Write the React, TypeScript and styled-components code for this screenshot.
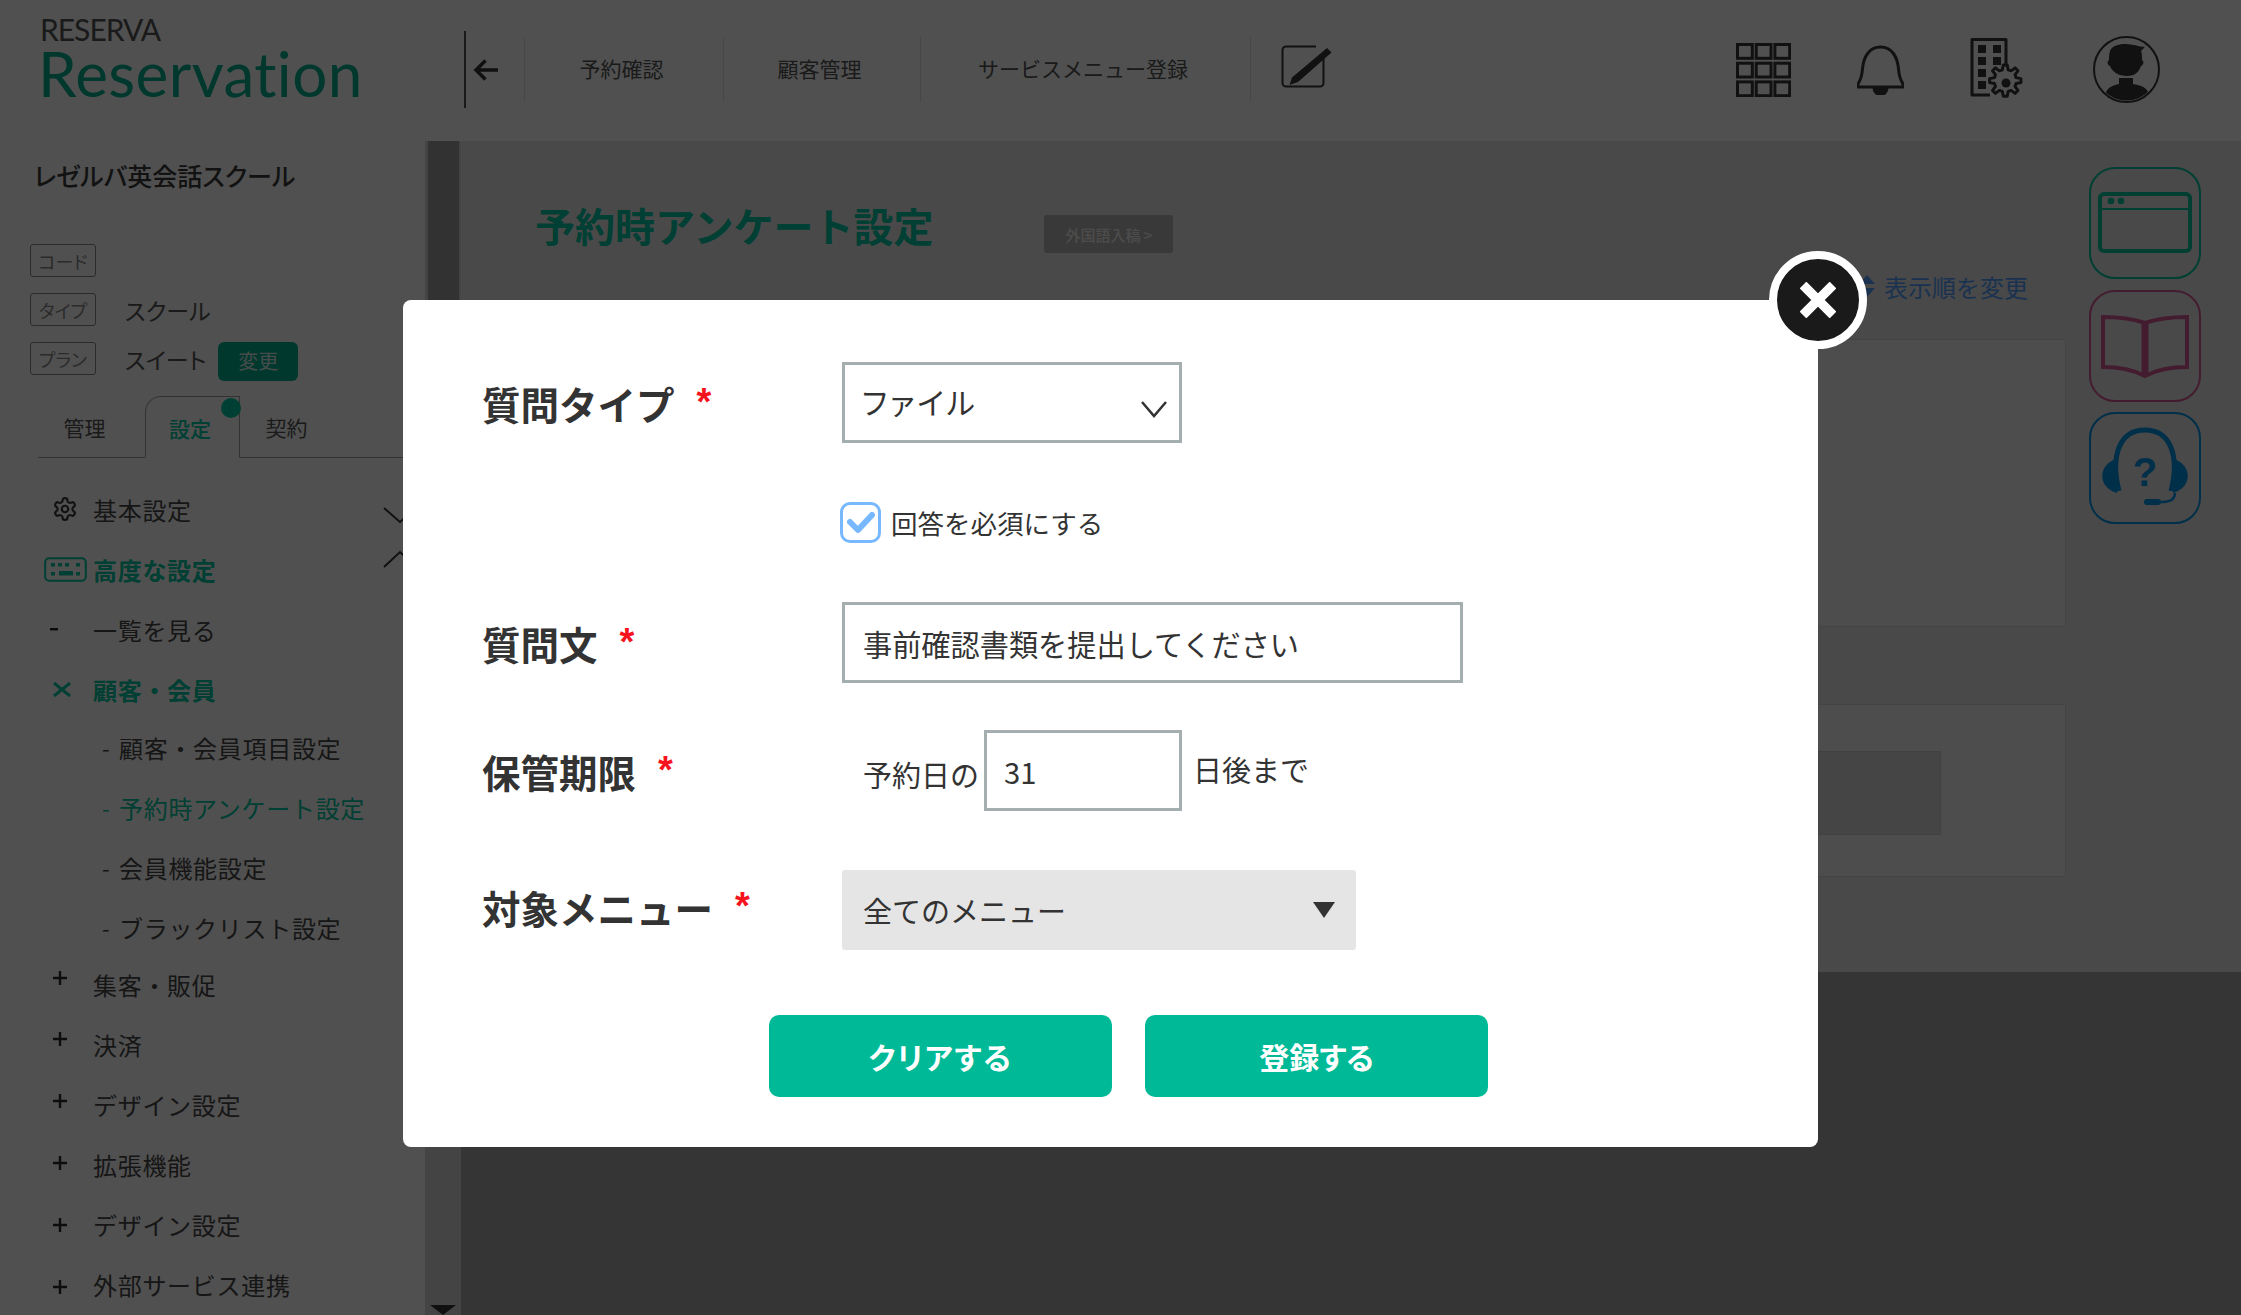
import styled, { createGlobalStyle } from 'styled-components'

const GlobalStyle = createGlobalStyle`
    html, body {
        margin: 0;
        padding: 0;
        background: #a9a9a9;
        font-family: "Noto Sans CJK JP", "Noto Sans", sans-serif;
        color: #404040;
    }
    * {
        box-sizing: border-box;
    }
`

const GREEN = '#00c8a2'

const Page = styled.div`
    width: 2241px;
    height: 1315px;
    overflow: hidden;
    position: relative;
`

const Overlay = styled.div`
    position: absolute;
    inset: 0;
    background: rgba(0, 0, 0, 0.686);
`

/* header */

const Header = styled.header`
    height: 141px;
    background: #fff;
    display: flex;
    align-items: center;
    padding: 0 81px 2px 0;
`

const Logo = styled.div`
    width: 464px;
    padding-left: 40px;
    margin-top: -24px;
`

const LogoTop = styled.div`
    font-family: "Lato", sans-serif;
    font-size: 30px;
    line-height: 30px;
    letter-spacing: -1px;
    color: #555;
`

const LogoMain = styled.div`
    margin-left: -2px;
    font-family: "Lato", sans-serif;
    font-size: 62px;
    line-height: 58px;
    letter-spacing: 0.4px;
    color: #00b391;
`

const BackCell = styled.div`
    width: 60px;
    height: 77px;
    border-left: 2px solid #555;
    display: flex;
    align-items: center;
    padding-left: 7px;
`

const NavItem = styled.div<{ $w: number }>`
    width: ${p => p.$w}px;
    height: 65px;
    border-left: 1px solid #e2e2e2;
    padding: 0 5px 3px 0;
    display: flex;
    align-items: center;
    justify-content: center;
    font-size: 21px;
    color: #555;
`

const EditCell = styled.div`
    height: 65px;
    border-left: 1px solid #e2e2e2;
    padding: 0 0 5px 30px;
    display: flex;
    align-items: center;
`

const HeaderIcons = styled.div`
    margin-left: auto;
    display: flex;
    align-items: center;
    gap: 66px;
    > :last-child {
        margin-left: 4px;
    }
`

/* body */

const Body = styled.div`
    display: flex;
    align-items: flex-start;
    height: 1174px;
`

const Sidebar = styled.aside`
    width: 425px;
    height: 100%;
    background: #fff;
    padding-top: 20px;
    flex-shrink: 0;
`

const SchoolName = styled.div`
    margin-left: 34px;
    font-size: 25px;
    line-height: 28px;
    font-weight: 500;
    color: #3c3c3c;
    font-feature-settings: "palt";
`

const InfoList = styled.div`
    margin: 55px 0 0 30px;
    display: flex;
    flex-direction: column;
    gap: 16px;
`

const InfoRow = styled.div`
    height: 33px;
    display: flex;
    align-items: center;
    font-size: 23px;
    line-height: 28px;
    color: #555;
    font-feature-settings: "palt";
`

const InfoBadge = styled.span`
    width: 66px;
    height: 33px;
    border: 1px solid #8a8a8a;
    border-radius: 3px;
    margin-right: 29px;
    font-size: 18px;
    color: #8a8a8a;
    display: flex;
    align-items: center;
    justify-content: center;
`

const ChangeButton = styled.span`
    width: 80px;
    height: 39px;
    margin: 5px 0 0 12px;
    background: #00b391;
    border-radius: 6px;
    color: #d8f0ea;
    font-size: 20px;
    display: flex;
    align-items: center;
    justify-content: center;
`

const Tabs = styled.div`
    margin: 21px 0 0 38px;
    height: 62px;
    border-bottom: 1px solid #a0a0a0;
    display: flex;
    align-items: stretch;
`

const Tab = styled.div<{ $active?: boolean }>`
    position: relative;
    width: ${p => (p.$active ? '95px' : '107px')};
    padding: 17px ${p => (p.$active ? '5px' : '14px')} 0 0;
    margin-bottom: -1px;
    text-align: center;
    font-size: 21px;
    line-height: 28px;
    color: ${p => (p.$active ? GREEN : '#555')};
    ${p => p.$active && `
        font-weight: 500;
        background: #fff;
        border: 1px solid #a0a0a0;
        border-bottom: 1px solid #fff;
        border-radius: 16px 0 0 0;
    `}
`

const TabDot = styled.span`
    position: absolute;
    top: 1px;
    right: -2px;
    width: 20px;
    height: 20px;
    border-radius: 50%;
    background: ${GREEN};
`

const Menu = styled.nav`
    margin-top: 21px;
`

const MenuRow = styled.div<{ $active?: boolean; $strong?: boolean }>`
    height: 60px;
    padding: 0 0 0 44px;
    display: flex;
    align-items: center;
    font-size: 24px;
    letter-spacing: 0.7px;
    font-weight: ${p => (p.$strong ? 700 : 400)};
    color: ${p => (p.$active ? GREEN : '#484848')};
`

const MenuIcon = styled.span<{ $left?: number; $lift?: number }>`
    width: 49px;
    flex-shrink: 0;
    padding-left: ${p => p.$left ?? 0}px;
    margin-top: ${p => -(p.$lift ?? 0)}px;
    display: flex;
    align-items: center;
`

const Chevron = styled.svg<{ $top: number }>`
    margin-left: auto;
    margin-right: 8px;
    align-self: flex-start;
    margin-top: ${p => p.$top}px;
    flex-shrink: 0;
`

const SubMenu = styled.div`
    margin: -2px 0 -3px;
`

const SubRow = styled.div<{ $active?: boolean }>`
    height: 60px;
    padding-left: 102px;
    display: flex;
    align-items: center;
    font-size: 24px;
    letter-spacing: 0.7px;
    color: ${p => (p.$active ? GREEN : '#484848')};
    &::before {
        content: '-';
        width: 17px;
        font-size: 22px;
    }
`

const ScrollBar = styled.div`
    width: 36px;
    height: 100%;
    flex-shrink: 0;
    background: #d8d8d8;
    display: flex;
    flex-direction: column;
    justify-content: space-between;
    align-items: center;
`

const ScrollThumb = styled.div`
    width: 31px;
    height: 320px;
    background: #a0a0a0;
`

const ScrollArrow = styled.div`
    width: 0;
    height: 0;
    border-left: 13px solid transparent;
    border-right: 13px solid transparent;
    border-top: 10px solid #333;
`

const Main = styled.main`
    flex: 1;
    height: 831px;
    background: #e8e8e8;
    display: flex;
    align-items: flex-start;
`

const Content = styled.div`
    width: 1605px;
    padding: 56px 0 0 74px;
`

const TitleRow = styled.div`
    display: flex;
    align-items: flex-start;
`

const Title = styled.h1`
    margin: 0;
    font-size: 40px;
    line-height: 56px;
    font-weight: 700;
    color: ${GREEN};
`

const LocaleButton = styled.span`
    width: 129px;
    height: 38px;
    margin: 18px 0 0 111px;
    border-radius: 3px;
    background: #b5b5b5;
    color: #f2f2f2;
    font-size: 15px;
    font-weight: 500;
    display: flex;
    align-items: center;
    justify-content: center;
`

const SortLink = styled.div`
    margin: 18px 38px 0 0;
    height: 30px;
    display: flex;
    justify-content: flex-end;
    align-items: center;
    gap: 9px;
    font-size: 24px;
    color: #55a0ff;
`

const Card = styled.div<{ $h: number; $top: number }>`
    height: ${p => p.$h}px;
    margin-top: ${p => p.$top}px;
    background: #f4f4f4;
    border: 1px solid #d8d8d8;
`

const CardInner = styled.div`
    margin: 46px 124px 0 60px;
    height: 84px;
    background: #dcdcdc;
    border: 1px solid #cfcfcf;
`

const Rail = styled.div`
    margin: 26px 0 0 23px;
    display: flex;
    flex-direction: column;
    gap: 10.5px;
`

const RailTile = styled.div<{ $color: string }>`
    width: 112px;
    height: 112px;
    border: 2px solid ${p => p.$color};
    border-radius: 26px;
    color: ${p => p.$color};
    display: flex;
    align-items: center;
    justify-content: center;
`

/* modal */

const Modal = styled.div`
    position: absolute;
    left: 403px;
    top: 300px;
    width: 1415px;
    height: 847px;
    background: #fff;
    border-radius: 8px;
    padding: 62px 0 0 79px;
`

const CloseButton = styled.div`
    position: absolute;
    top: -49px;
    right: -49px;
    width: 98px;
    height: 98px;
    border-radius: 50%;
    background: #1a1a1a;
    border: 8px solid #fff;
    display: flex;
    align-items: center;
    justify-content: center;
`

const FormRow = styled.div<{ $top?: number }>`
    display: grid;
    grid-template-columns: 360px 1fr;
    align-items: center;
    margin-top: ${p => p.$top ?? 0}px;
`

const FieldLabel = styled.label<{ $raise?: number }>`
    display: flex;
    margin-bottom: ${p => p.$raise ?? 0}px;
    font-size: 38.5px;
    line-height: 44px;
    font-weight: 700;
    color: #333;
`

const Required = styled.span`
    margin: -1px 0 0 22px;
    font-family: "Liberation Sans", sans-serif;
    font-weight: 700;
    font-size: 38px;
    color: #f5141e;
`

const Control = styled.div`
    width: 340px;
    height: 81px;
    border: 3px solid #a4aeae;
    padding: 0 12px 4px 17px;
    display: flex;
    align-items: center;
    justify-content: space-between;
    font-size: 30px;
    letter-spacing: 3px;
    color: #333;
    font-feature-settings: "palt";
`

const Caret = styled.svg`
    margin-top: 16px;
`

const CheckLine = styled.div`
    display: flex;
    align-items: center;
    gap: 10px;
    margin-left: -2px;
    font-size: 26.5px;
    color: #333;
`

const CheckBox = styled.span`
    width: 41px;
    height: 41px;
    border: 3px solid #78b8ff;
    border-radius: 10px;
    display: flex;
    align-items: center;
    justify-content: center;
`

const TextField = styled.input<{ $w: number; $pad: number }>`
    width: ${p => p.$w}px;
    height: 81px;
    border: 3px solid #a4aeae;
    border-radius: 0;
    padding: 0 ${p => p.$pad}px;
    outline: none;
    font-family: inherit;
    font-size: 29.2px;
    color: #333;
    background: #fff;
`

const PeriodLine = styled.div`
    display: flex;
    align-items: center;
    padding-left: 21px;
    font-size: 29px;
    color: #333;
`

const PeriodText = styled.span<{ $shift: number }>`
    margin: ${p => p.$shift}px ${p => (p.$shift > 0 ? 5 : 0)}px 0 ${p => (p.$shift > 0 ? 0 : 11)}px;
`

const GraySelect = styled.div`
    width: 514px;
    height: 80px;
    background: #e5e5e5;
    border-radius: 3px;
    padding: 0 21px;
    display: flex;
    align-items: center;
    justify-content: space-between;
    font-size: 29px;
    color: #333;
`

const ArrowDown = styled.span`
    width: 0;
    height: 0;
    border-left: 11px solid transparent;
    border-right: 11px solid transparent;
    border-top: 16px solid #333;
`

const Actions = styled.div`
    margin: 65px 0 0 287px;
    display: flex;
    gap: 33px;
`

const ActionButton = styled.button<{ $tracking?: number }>`
    width: 343px;
    height: 82px;
    border: none;
    border-radius: 10px;
    background: #00ba97;
    color: #fff;
    font-family: inherit;
    font-size: 30px;
    font-weight: 700;
    letter-spacing: ${p => p.$tracking ?? 0}px;
    font-feature-settings: "palt";
`

const Gear = () => (
    <svg width="26" height="26" viewBox="0 0 24 24" fill="none" stroke="#3a3a3a" strokeWidth="2" strokeLinecap="round" strokeLinejoin="round">
        <path d="M12.22 2h-.44a2 2 0 0 0-2 2v.18a2 2 0 0 1-1 1.73l-.43.25a2 2 0 0 1-2 0l-.15-.08a2 2 0 0 0-2.73.73l-.22.38a2 2 0 0 0 .73 2.73l.15.1a2 2 0 0 1 1 1.72v.51a2 2 0 0 1-1 1.74l-.15.09a2 2 0 0 0-.73 2.73l.22.38a2 2 0 0 0 2.73.73l.15-.08a2 2 0 0 1 2 0l.43.25a2 2 0 0 1 1 1.73V20a2 2 0 0 0 2 2h.44a2 2 0 0 0 2-2v-.18a2 2 0 0 1 1-1.73l.43-.25a2 2 0 0 1 2 0l.15.08a2 2 0 0 0 2.73-.73l.22-.39a2 2 0 0 0-.73-2.73l-.15-.08a2 2 0 0 1-1-1.74v-.5a2 2 0 0 1 1-1.74l.15-.09a2 2 0 0 0 .73-2.73l-.22-.38a2 2 0 0 0-2.73-.73l-.15.08a2 2 0 0 1-2 0l-.43-.25a2 2 0 0 1-1-1.73V4a2 2 0 0 0-2-2z" />
        <circle cx="12" cy="12" r="3" />
    </svg>
)

const Keyboard = () => (
    <svg width="43" height="25" viewBox="0 0 43 25" fill={GREEN}>
        <rect x="1.2" y="1.2" width="40.6" height="22.6" rx="4" fill="none" stroke={GREEN} strokeWidth="2" />
        <rect x="7" y="6" width="4" height="3.5" />
        <rect x="14" y="6" width="4" height="3.5" />
        <rect x="21" y="6" width="4" height="3.5" />
        <rect x="32" y="6" width="4" height="3.5" />
        <rect x="7" y="15" width="4" height="3.5" />
        <rect x="15" y="14" width="14" height="4.5" />
        <rect x="32" y="15" width="4" height="3.5" />
    </svg>
)

const Plus = () => (
    <svg width="14" height="14" viewBox="0 0 14 14" stroke="#2c2c2c" strokeWidth="2.4">
        <path d="M7 0v14M0 7h14" />
    </svg>
)

const Dash = () => (
    <svg width="8" height="3" viewBox="0 0 8 3">
        <rect width="8" height="2.4" fill="#222" />
    </svg>
)

const Cross = () => (
    <svg width="18" height="15" viewBox="0 0 18 15" stroke={GREEN} strokeWidth="3">
        <path d="M1 1l16 13M17 1L1 14" />
    </svg>
)

const ChevronDown = () => (
    <Chevron $top={28} width="34" height="17" viewBox="0 0 34 17" fill="none" stroke="#333" strokeWidth="2">
        <path d="M1 1l16 14L33 1" />
    </Chevron>
)

const ChevronUp = () => (
    <Chevron $top={11} width="34" height="18" viewBox="0 0 34 18" fill="none" stroke="#333" strokeWidth="2">
        <path d="M1 17L17 2l16 15" />
    </Chevron>
)

const GridIcon = () => {
    const cells = [0, 1, 2].flatMap(r => [0, 1, 2].map(c => ({ r, c })))
    return (
        <svg width="55" height="54" viewBox="0 0 55 54" fill="none" stroke="#363636" strokeWidth="3">
            {cells.map(({ r, c }) => (
                <rect key={`${r}-${c}`} x={1.5 + c * 18.7} y={1.5 + r * 18.7} width="14.8" height="13.8" />
            ))}
        </svg>
    )
}

const BellIcon = () => (
    <svg width="47" height="50" viewBox="0 0 47 50" fill="none" stroke="#363636" strokeWidth="3" strokeLinejoin="round">
        <path d="M23.5 2C12 2 6.5 12 5.5 24c-.6 7.5-1.5 10-4 14-.8 1.3-.5 4-.5 4h45s.3-2.700-.5-4c-2.500-4-3.400-6.500-4-14C40.500 12 35 2 23.500 2z" />
        <path d="M17 43a6.500 6.500 0 0 0 13 0z" fill="#363636" />
    </svg>
)

const BuildingGearIcon = () => (
    <svg width="53" height="63" viewBox="0 0 53 63" fill="#363636">
        <path d="M20 57H2V1.500h34V29" fill="none" stroke="#363636" strokeWidth="3" strokeLinejoin="round" />
        <rect x="8" y="7" width="8" height="8" />
        <rect x="23" y="7" width="8" height="8" />
        <rect x="8" y="19" width="8" height="8" />
        <rect x="23" y="19" width="8" height="8" />
        <rect x="8" y="31" width="8" height="8" />
        <rect x="8" y="43" width="8" height="8" />
        <path
            d="M35 28h4l1 5 3 1 4-3 3 3-3 4 1 3 5 1v4l-5 1-1 3 3 4-3 3-4-3-3 1-1 5h-4l-1-5-3-1-4 3-3-3 3-4-1-3-5-1v-4l5-1 1-3-3-4 3-3 4 3 3-1z"
            transform="translate(-1 -0.500) scale(0.98)"
            fill="#fff"
            stroke="#363636"
            strokeWidth="3"
            strokeLinejoin="round"
        />
        <circle cx="36" cy="45" r="4.500" />
    </svg>
)

const AvatarIcon = () => (
    <svg width="67" height="67" viewBox="0 0 67 67">
        <defs>
            <clipPath id="avatar-circle">
                <circle cx="33.500" cy="33.500" r="31" />
            </clipPath>
        </defs>
        <circle cx="33.500" cy="33.500" r="32.500" fill="none" stroke="#363636" strokeWidth="2" />
        <g clipPath="url(#avatar-circle)" fill="#363636">
            <path d="M17 15c2-5 8-7 15-7 5 0 10 1 13 2 2 .5 5 1 7 .5-1.500 2-3 3.500-4 4.500 1 2 1 5 1 9 2 1 2 5-1 6-2 6-6 10-14 10S19 36 17 30c-3-1-3-5-1-6 0-3 0-6 1-9z" />
            <path d="M26 42h14v6c5 1 10 2 13 5 2 2 3 5 3 8v6H12v-6c0-3 1-6 3-8 3-3 7-4 11-5z" />
        </g>
    </svg>
)

const EditIcon = () => (
    <svg width="52" height="44" viewBox="0 0 52 44" fill="none">
        <path d="M35 1.500H5a3.500 3.500 0 0 0-3.500 3.500v33a3.500 3.500 0 0 0 3.500 3.500h34a3.500 3.500 0 0 0 3.500-3.500V10" stroke="#363636" strokeWidth="2" />
        <path d="M46 3l4.500 4.500L17 37l-8.500 3 2.500-7.500z" fill="#363636" />
    </svg>
)

const BackArrow = () => (
    <svg width="25" height="22" viewBox="0 0 25 22" fill="none" stroke="#333" strokeWidth="3.500">
        <path d="M25 11H3M12.500 1.500L3 11l9.500 9.500" />
    </svg>
)

const SortIcon = () => (
    <svg width="16" height="22" viewBox="0 0 16 22" fill="#55a0ff">
        <path d="M8 0l8 9H0zM8 22l-8-9h16z" />
    </svg>
)

const WindowIcon = () => (
    <svg width="106" height="106" viewBox="0 0 106 106" fill="none" stroke="currentColor">
        <rect x="8" y="24" width="90" height="57" rx="4" strokeWidth="4" />
        <path d="M8 39h90" strokeWidth="2" />
        <circle cx="19" cy="31" r="3.300" fill="currentColor" stroke="none" />
        <circle cx="29" cy="31" r="3.300" fill="currentColor" stroke="none" />
    </svg>
)

const BookIcon = () => (
    <svg width="106" height="106" viewBox="0 0 106 106" fill="none" stroke="currentColor">
        <path d="M11 24q25 0 42 6q17-6 42-6v50q-25 0-42 9q-17-9-42-9z" strokeWidth="4" />
        <path d="M53 30v52" strokeWidth="7" />
    </svg>
)

const HelpIcon = () => (
    <svg width="106" height="106" viewBox="0 0 106 106" fill="currentColor">
        <path d="M27 76C18 40 28 15 53 15s35 25 26 61" fill="none" stroke="currentColor" strokeWidth="5" />
        <path d="M24 44C6 50 5 72 25 78z" />
        <path d="M82 44c18 6 19 28-1 34z" />
        <path d="M83 78q0 9-13 9H66" fill="none" stroke="currentColor" strokeWidth="2.500" />
        <rect x="52" y="84" width="17" height="6" rx="3" />
        <text x="53" y="71" textAnchor="middle" fontFamily="'Liberation Sans', sans-serif" fontWeight="700" fontSize="40">?</text>
    </svg>
)

const CheckMark = () => (
    <svg width="28" height="24" viewBox="0 0 28 24" fill="none" stroke="#78b8ff" strokeWidth="6" strokeLinecap="round" strokeLinejoin="round">
        <path d="M3 11l8 8L25 4" />
    </svg>
)

const SelectCaret = () => (
    <Caret width="26" height="18" viewBox="0 0 26 18" fill="none" stroke="#333" strokeWidth="2.500">
        <path d="M1 2l12 14L25 2" />
    </Caret>
)

const CloseCross = () => (
    <svg width="36" height="36" viewBox="0 0 36 36" stroke="#fff" strokeWidth="9.500">
        <path d="M3 3l30 30M33 3L3 33" />
    </svg>
)

const App = () => {
    return <>
        <GlobalStyle />
        <Page>
            <Header>
                <Logo>
                    <LogoTop>RESERVA</LogoTop>
                    <LogoMain>Reservation</LogoMain>
                </Logo>
                <BackCell><BackArrow /></BackCell>
                <NavItem $w={199}>予約確認</NavItem>
                <NavItem $w={197}>顧客管理</NavItem>
                <NavItem $w={330}>サービスメニュー登録</NavItem>
                <EditCell><EditIcon /></EditCell>
                <HeaderIcons>
                    <GridIcon />
                    <BellIcon />
                    <BuildingGearIcon />
                    <AvatarIcon />
                </HeaderIcons>
            </Header>
            <Body>
                <Sidebar>
                    <SchoolName>レゼルバ英会話スクール</SchoolName>
                    <InfoList>
                        <InfoRow><InfoBadge>コード</InfoBadge></InfoRow>
                        <InfoRow><InfoBadge>タイプ</InfoBadge>スクール</InfoRow>
                        <InfoRow><InfoBadge>プラン</InfoBadge>スイート<ChangeButton>変更</ChangeButton></InfoRow>
                    </InfoList>
                    <Tabs>
                        <Tab>管理</Tab>
                        <Tab $active>設定<TabDot /></Tab>
                        <Tab>契約</Tab>
                    </Tabs>
                    <Menu>
                        <MenuRow><MenuIcon $left={8}><Gear /></MenuIcon>基本設定<ChevronDown /></MenuRow>
                        <MenuRow $active $strong><MenuIcon><Keyboard /></MenuIcon>高度な設定<ChevronUp /></MenuRow>
                        <MenuRow><MenuIcon $left={6}><Dash /></MenuIcon>一覧を見る</MenuRow>
                        <MenuRow $active $strong><MenuIcon $left={9}><Cross /></MenuIcon>顧客・会員</MenuRow>
                        <SubMenu>
                            <SubRow>顧客・会員項目設定</SubRow>
                            <SubRow $active>予約時アンケート設定</SubRow>
                            <SubRow>会員機能設定</SubRow>
                            <SubRow>ブラックリスト設定</SubRow>
                        </SubMenu>
                        {['集客・販促', '決済', 'デザイン設定', '拡張機能', 'デザイン設定', '外部サービス連携'].map((label, i) => (
                            <MenuRow key={i}><MenuIcon $left={9} $lift={13 - i * 3.6}><Plus /></MenuIcon>{label}</MenuRow>
                        ))}
                    </Menu>
                </Sidebar>
                <ScrollBar>
                    <ScrollThumb />
                    <ScrollArrow />
                </ScrollBar>
                <Main>
                    <Content>
                        <TitleRow>
                            <Title>予約時アンケート設定</Title>
                            <LocaleButton>外国語入稿 &gt;</LocaleButton>
                        </TitleRow>
                        <SortLink><SortIcon />表示順を変更</SortLink>
                        <Card $h={288} $top={38} />
                        <Card $h={173} $top={77}><CardInner /></Card>
                    </Content>
                    <Rail>
                        <RailTile $color="#00c8a0"><WindowIcon /></RailTile>
                        <RailTile $color="#d85a95"><BookIcon /></RailTile>
                        <RailTile $color="#0095e8"><HelpIcon /></RailTile>
                    </Rail>
                </Main>
            </Body>
            <Overlay />
            <Modal>
                <CloseButton><CloseCross /></CloseButton>
                <FormRow>
                    <FieldLabel>質問タイプ<Required>*</Required></FieldLabel>
                    <Control>ファイル<SelectCaret /></Control>
                </FormRow>
                <FormRow $top={59}>
                    <span />
                    <CheckLine><CheckBox><CheckMark /></CheckBox>回答を必須にする</CheckLine>
                </FormRow>
                <FormRow $top={59}>
                    <FieldLabel>質問文<Required>*</Required></FieldLabel>
                    <TextField $w={621} $pad={18} defaultValue="事前確認書類を提出してください" />
                </FormRow>
                <FormRow $top={47}>
                    <FieldLabel>保管期限<Required>*</Required></FieldLabel>
                    <PeriodLine>
                        <PeriodText $shift={6}>予約日の</PeriodText>
                        <TextField $w={198} $pad={17} defaultValue="31" />
                        <PeriodText $shift={-4}>日後まで</PeriodText>
                    </PeriodLine>
                </FormRow>
                <FormRow $top={59}>
                    <FieldLabel $raise={6}>対象メニュー<Required>*</Required></FieldLabel>
                    <GraySelect>全てのメニュー<ArrowDown /></GraySelect>
                </FormRow>
                <Actions>
                    <ActionButton $tracking={1.8}>クリアする</ActionButton>
                    <ActionButton>登録する</ActionButton>
                </Actions>
            </Modal>
        </Page>
    </>
}

export default App
